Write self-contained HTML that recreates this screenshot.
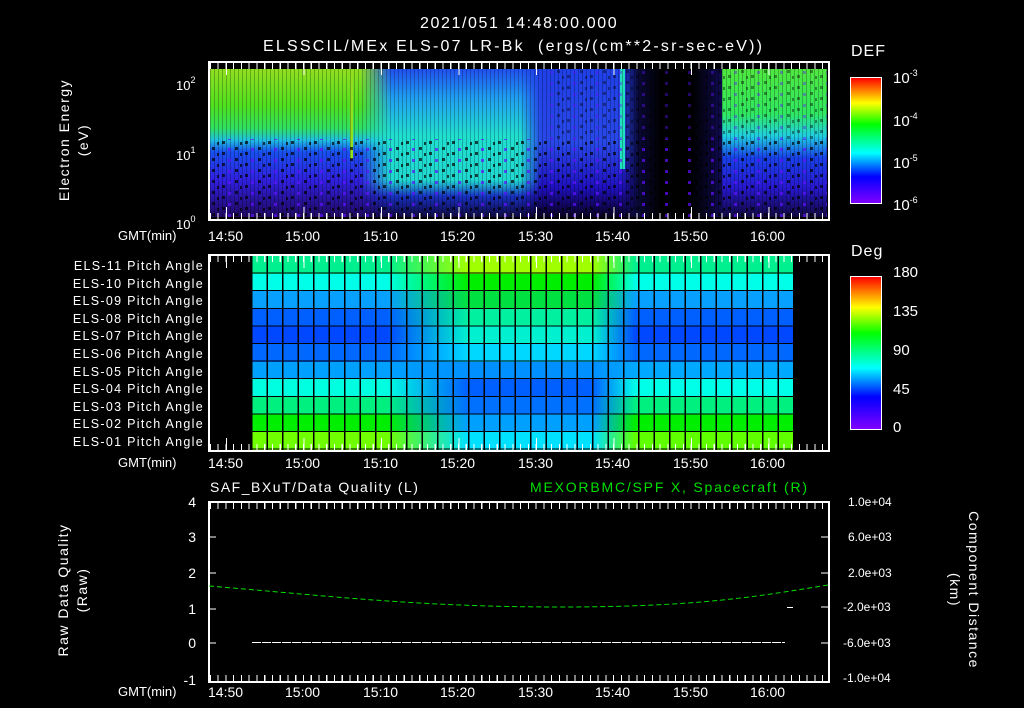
<!DOCTYPE html>
<html><head><meta charset="utf-8"><style>
body{margin:0;background:#000;width:1024px;height:708px;overflow:hidden;position:relative;font-family:"Liberation Sans",sans-serif;color:#fff}
.a{position:absolute}
.t{position:absolute;white-space:nowrap;font-size:13px;line-height:14px}
.frame{position:absolute;border:2px solid #fff;box-sizing:border-box}
.tk{position:absolute;left:0;right:0;height:6px;background:repeating-linear-gradient(90deg,#fff 0 1px,transparent 1px 7.75px)}
.tkb{position:absolute;left:0;right:0;height:12px;background:repeating-linear-gradient(90deg,#fff 0 1px,transparent 1px 77.5px);background-position:16px 0}
.row{position:absolute;left:0;width:542px;height:17.6px}
.cb{background:linear-gradient(180deg,#ff0000 0%,#ff8000 10%,#ffff00 20%,#00ff00 37%,#00ffff 60%,#0000ff 79%,#8000ff 100%)}
sup{font-size:9px;vertical-align:7px}
.m{-webkit-mask-image:linear-gradient(90deg,transparent,#000 15%,#000 85%,transparent);mask-image:linear-gradient(90deg,transparent,#000 15%,#000 85%,transparent)}
</style></head><body>

<div class="t" style="left:420px;top:15px;font-size:16px;line-height:18px;letter-spacing:1.6px">2021/051 14:48:00.000</div>
<div class="t" style="left:263px;top:38px;font-size:16px;line-height:18px;letter-spacing:2.2px">ELSSCIL/MEx ELS-07 LR-Bk&nbsp; (ergs/(cm**2-sr-sec-eV))</div>

<!-- TOP SPECTROGRAM -->
<div class="a" style="left:210px;top:69px;width:617px;height:148px;overflow:hidden;background:#3010d0">
  <div class="a" style="left:0;top:0;width:617px;height:148px;background:linear-gradient(180deg,#90e020 0%,#50e020 25%,#30e060 40%,#20c0e0 48%,#1850f0 56%,#3020e0 75%,#200860 100%)"></div>
  <div class="a m" style="left:150px;top:0;width:210px;height:148px;background:linear-gradient(180deg,#2050f0 0%,#20a0f0 20%,#20e0d0 45%,#20d8d0 75%,#1830c0 86%,#100840 100%)"></div>
  <div class="a m" style="left:310px;top:0;width:140px;height:148px;background:linear-gradient(180deg,#2040e8 0%,#2848e8 50%,#2010c0 80%,#080020 100%)"></div>
  <div class="a m" style="left:410px;top:0;width:120px;height:148px;background:linear-gradient(90deg,#101060,#000 35%,#000 60%,#181080)"></div>
  <div class="a" style="left:512px;top:0;width:105px;height:148px;background:linear-gradient(180deg,#50e840 0%,#30e860 30%,#20d0e0 45%,#1840e8 60%,#2818d0 80%,#100840 100%)"></div>
  <div class="a" style="left:410px;top:0;width:5px;height:100px;background:#20e0c0"></div>
  <div class="a" style="left:140px;top:0;width:3px;height:90px;background:#90e020"></div>
  <svg class="a" style="left:0;top:0" width="617" height="148"><defs><pattern id="n" width="23" height="11" patternUnits="userSpaceOnUse"><rect x="2" y="1" width="3" height="3" fill="#000"/><rect x="12" y="6" width="3" height="3" fill="#000"/><rect x="18" y="2" width="3" height="3" fill="#6010ff"/><rect x="7" y="7" width="2" height="3" fill="#000"/></pattern><pattern id="s" width="4" height="148" patternUnits="userSpaceOnUse"><rect x="0" width="1" height="148" fill="#000" opacity="0.25"/></pattern></defs><rect x="0" y="0" width="617" height="148" fill="url(#s)"/><rect x="0" y="70" width="617" height="78" fill="url(#n)" opacity="0.7"/><rect x="340" y="0" width="277" height="70" fill="url(#n)" opacity="0.4"/></svg>
</div>
<div class="frame" style="left:208px;top:61px;width:622px;height:160px">
  <div class="tk" style="top:0"></div><div class="tkb" style="top:0"></div>
  <div class="tk" style="bottom:0;top:auto"></div><div class="tkb" style="bottom:0"></div>
</div>
<div class="t" style="left:176px;top:73px">10<sup>2</sup></div>
<div class="t" style="left:176px;top:143px">10<sup>1</sup></div>
<div class="t" style="left:176px;top:212px">10<sup>0</sup></div>
<div class="a" style="left:74px;top:140px;width:0;height:0;transform:rotate(-90deg)"><div class="t" style="left:-80px;top:-17px;width:160px;text-align:center;font-size:14px;letter-spacing:1.5px">Electron Energy</div><div class="t" style="left:-80px;top:2px;width:160px;text-align:center;font-size:14px;letter-spacing:1.5px">(eV)</div></div>

<div class="t" style="left:118px;top:229px">GMT(min)</div>
<div class="t" style="left:208px;top:229px;font-size:14px">14:50</div>
<div class="t" style="left:285px;top:229px;font-size:14px">15:00</div>
<div class="t" style="left:363px;top:229px;font-size:14px">15:10</div>
<div class="t" style="left:440px;top:229px;font-size:14px">15:20</div>
<div class="t" style="left:518px;top:229px;font-size:14px">15:30</div>
<div class="t" style="left:595px;top:229px;font-size:14px">15:40</div>
<div class="t" style="left:673px;top:229px;font-size:14px">15:50</div>
<div class="t" style="left:750px;top:229px;font-size:14px">16:00</div>

<div class="t" style="left:851px;top:45px;font-size:16px;letter-spacing:1px">DEF</div>
<div class="a cb" style="left:850px;top:77px;width:32px;height:127px;border:1px solid #fff;box-sizing:border-box"></div>
<div class="t" style="left:893px;top:66px;font-size:15px">10<sup>-3</sup></div>
<div class="t" style="left:893px;top:109px;font-size:15px">10<sup>-4</sup></div>
<div class="t" style="left:893px;top:151px;font-size:15px">10<sup>-5</sup></div>
<div class="t" style="left:893px;top:193px;font-size:15px">10<sup>-6</sup></div>

<!-- PITCH GRID -->
<div class="a" style="left:251px;top:256px;width:542px;height:194px">
<div class="row" style="top:0;background:linear-gradient(90deg,#00f090 0,#00f090 25%,#a0ff00 40%,#a0ff00 63%,#00f090 71%,#00f090 100%)"></div>
<div class="row" style="top:17.6px;background:linear-gradient(90deg,#00ffe8 0,#00ffe8 25%,#00ee00 40%,#00ee00 63%,#00ffe8 71%,#00ffe8 100%)"></div>
<div class="row" style="top:35.2px;background:linear-gradient(90deg,#08a0ff 0,#08a0ff 25%,#00e040 40%,#00e040 63%,#08a0ff 71%,#08a0ff 100%)"></div>
<div class="row" style="top:52.8px;background:linear-gradient(90deg,#0060ff 0,#0060ff 25%,#00f0a0 40%,#00f0a0 63%,#0060ff 71%,#0060ff 100%)"></div>
<div class="row" style="top:70.4px;background:linear-gradient(90deg,#0048ff 0,#0048ff 25%,#00f0d0 40%,#00f0d0 63%,#0048ff 71%,#0048ff 100%)"></div>
<div class="row" style="top:88px;background:linear-gradient(90deg,#0068ff 0,#0068ff 25%,#00d8ff 40%,#00d8ff 63%,#0068ff 71%,#0068ff 100%)"></div>
<div class="row" style="top:105.6px;background:linear-gradient(90deg,#00a0ff 0,#00a0ff 25%,#0090ff 40%,#0090ff 63%,#00a8ff 71%,#00a8ff 100%)"></div>
<div class="row" style="top:123.2px;background:linear-gradient(90deg,#00ffe0 0,#00ffe0 25%,#0060ff 40%,#0060ff 63%,#00ffe8 71%,#00ffe8 100%)"></div>
<div class="row" style="top:140.8px;background:linear-gradient(90deg,#00f080 0,#00f080 25%,#0070ff 40%,#0070ff 63%,#00f080 71%,#00f080 100%)"></div>
<div class="row" style="top:158.4px;background:linear-gradient(90deg,#00ee00 0,#00ee00 25%,#00a0ff 40%,#00a0ff 63%,#00ee00 71%,#00ee00 100%)"></div>
<div class="row" style="top:176px;height:18px;background:linear-gradient(90deg,#70ff00 0,#70ff00 25%,#00e0ff 40%,#00e0ff 63%,#60ff00 71%,#60ff00 100%)"></div>
<div class="a" style="left:0;top:0;width:542px;height:194px;background:repeating-linear-gradient(90deg,#000 0 1.5px,transparent 1.5px 15.49px),repeating-linear-gradient(180deg,transparent 0 16.6px,#000 16.6px 17.6px)"></div>
</div>
<div class="frame" style="left:208px;top:254px;width:622px;height:198px">
  <div class="tk" style="top:0"></div><div class="tkb" style="top:0"></div>
  <div class="tk" style="bottom:0;top:auto"></div><div class="tkb" style="bottom:0"></div>
</div>
<div class="t" style="left:40px;top:258px;width:164px;text-align:right;line-height:17.6px;font-size:12.5px;letter-spacing:1.3px">ELS-11 Pitch Angle<br>ELS-10 Pitch Angle<br>ELS-09 Pitch Angle<br>ELS-08 Pitch Angle<br>ELS-07 Pitch Angle<br>ELS-06 Pitch Angle<br>ELS-05 Pitch Angle<br>ELS-04 Pitch Angle<br>ELS-03 Pitch Angle<br>ELS-02 Pitch Angle<br>ELS-01 Pitch Angle</div>

<div class="t" style="left:118px;top:456px">GMT(min)</div>
<div class="t" style="left:208px;top:456px;font-size:14px">14:50</div>
<div class="t" style="left:285px;top:456px;font-size:14px">15:00</div>
<div class="t" style="left:363px;top:456px;font-size:14px">15:10</div>
<div class="t" style="left:440px;top:456px;font-size:14px">15:20</div>
<div class="t" style="left:518px;top:456px;font-size:14px">15:30</div>
<div class="t" style="left:595px;top:456px;font-size:14px">15:40</div>
<div class="t" style="left:673px;top:456px;font-size:14px">15:50</div>
<div class="t" style="left:750px;top:456px;font-size:14px">16:00</div>

<div class="t" style="left:851px;top:245px;font-size:16px;letter-spacing:1px">Deg</div>
<div class="a cb" style="left:850px;top:276px;width:32px;height:154px;border:1px solid #fff;box-sizing:border-box"></div>
<div class="t" style="left:893px;top:266px;font-size:15px">180</div>
<div class="t" style="left:893px;top:305px;font-size:15px">135</div>
<div class="t" style="left:893px;top:344px;font-size:15px">90</div>
<div class="t" style="left:893px;top:383px;font-size:15px">45</div>
<div class="t" style="left:893px;top:421px;font-size:15px">0</div>

<!-- BOTTOM PANEL -->
<div class="t" style="left:210px;top:480px;font-size:14px;letter-spacing:1.5px">SAF_BXuT/Data Quality (L)</div>
<div class="t" style="left:530px;top:480px;font-size:14px;color:#00e000;letter-spacing:1.8px">MEXORBMC/SPF X, Spacecraft (R)</div>
<div class="frame" style="left:208px;top:501px;width:622px;height:182px">
  <div class="tk" style="top:0"></div>
  <div class="tk" style="bottom:0;top:auto"></div>
</div>
<svg class="a" style="left:0;top:0" width="1024" height="708">
<path d="M209 586 C 330 596, 420 607, 560 607 S 760 596, 828 585" stroke="#00e000" stroke-width="1" fill="none" stroke-dasharray="5 3"/>
<line x1="252" y1="642.5" x2="785" y2="642.5" stroke="#fff" stroke-width="1" stroke-dasharray="9 1"/>
<line x1="787" y1="607.5" x2="793" y2="607.5" stroke="#fff"/>
<g stroke="#fff">
<line x1="209" y1="537" x2="216" y2="537"/><line x1="209" y1="573" x2="216" y2="573"/><line x1="209" y1="609" x2="216" y2="609"/><line x1="209" y1="643" x2="216" y2="643"/>
<line x1="821" y1="537" x2="828" y2="537"/><line x1="821" y1="573" x2="828" y2="573"/><line x1="821" y1="607" x2="828" y2="607"/><line x1="821" y1="643" x2="828" y2="643"/>
</g>
</svg>
<div class="t" style="left:170px;top:495px;width:26px;text-align:right;font-size:14px">4</div>
<div class="t" style="left:170px;top:530px;width:26px;text-align:right;font-size:14px">3</div>
<div class="t" style="left:170px;top:566px;width:26px;text-align:right;font-size:14px">2</div>
<div class="t" style="left:170px;top:602px;width:26px;text-align:right;font-size:14px">1</div>
<div class="t" style="left:170px;top:636px;width:26px;text-align:right;font-size:14px">0</div>
<div class="t" style="left:170px;top:673px;width:26px;text-align:right;font-size:14px">-1</div>
<div class="t" style="left:848px;top:495px;font-size:12px">1.0e+04</div>
<div class="t" style="left:848px;top:530px;font-size:12px">6.0e+03</div>
<div class="t" style="left:848px;top:566px;font-size:12px">2.0e+03</div>
<div class="t" style="left:843px;top:600px;font-size:12px">-2.0e+03</div>
<div class="t" style="left:843px;top:636px;font-size:12px">-6.0e+03</div>
<div class="t" style="left:843px;top:671px;font-size:12px">-1.0e+04</div>

<div class="a" style="left:73px;top:590px;width:0;height:0;transform:rotate(-90deg)"><div class="t" style="left:-80px;top:-17px;width:160px;text-align:center;font-size:14px;letter-spacing:1.5px">Raw Data Quality</div><div class="t" style="left:-80px;top:2px;width:160px;text-align:center;font-size:14px;letter-spacing:1.5px">(Raw)</div></div>
<div class="a" style="left:964px;top:590px;width:0;height:0;transform:rotate(90deg)"><div class="t" style="left:-90px;top:-17px;width:180px;text-align:center;font-size:14px;letter-spacing:1.5px">Component Distance</div><div class="t" style="left:-90px;top:2px;width:180px;text-align:center;font-size:14px;letter-spacing:1.5px">(km)</div></div>

<div class="t" style="left:118px;top:685px">GMT(min)</div>
<div class="t" style="left:208px;top:685px;font-size:14px">14:50</div>
<div class="t" style="left:285px;top:685px;font-size:14px">15:00</div>
<div class="t" style="left:363px;top:685px;font-size:14px">15:10</div>
<div class="t" style="left:440px;top:685px;font-size:14px">15:20</div>
<div class="t" style="left:518px;top:685px;font-size:14px">15:30</div>
<div class="t" style="left:595px;top:685px;font-size:14px">15:40</div>
<div class="t" style="left:673px;top:685px;font-size:14px">15:50</div>
<div class="t" style="left:750px;top:685px;font-size:14px">16:00</div>
</body></html>
